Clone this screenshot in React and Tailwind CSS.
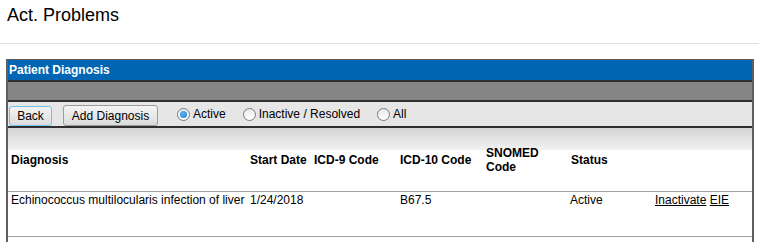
import React from "react";

function Radio({ checked, label }) {
  return (
    <label className="flex items-center">
      <span className="relative flex h-[13px] w-[13px] items-center justify-center rounded-full border border-[#7b7b7b] bg-[linear-gradient(to_bottom,#e9e9e9,#ffffff)]">
        {checked && (
          <span className="h-[7px] w-[7px] rounded-full bg-[radial-gradient(circle_at_40%_35%,#5ab4f0,#1a7fd0)]" />
        )}
      </span>
      <span className="ml-[3px] text-[12px] leading-[14px]">{label}</span>
    </label>
  );
}

export default function App() {
  return (
    <div className="h-[242px] w-[759px] overflow-hidden bg-white font-['Liberation_Sans',Arial,sans-serif] text-black">
      <div className="h-[44px] border-b border-[#e0e0e0] pl-[7px] pt-[5px] text-[18px] leading-[20px]">
        Act. Problems
      </div>
      <div className="pl-[6px] pt-[15px]">
        <div className="h-[200px] w-[748px] border-x-2 border-t border-[#5f5f5f]">
          <div className="flex h-[20px] items-center bg-[#0066b3] pl-[1px] text-[12px] font-bold leading-[14px] text-white">
            Patient Diagnosis
          </div>
          <div className="h-[2px] bg-[#2f2f2f]" />
          <div className="h-[18px] bg-[#858585]" />
          <div className="h-[2px] bg-[#2f2f2f]" />
          <div className="flex h-[24px] items-start bg-[#e6e6e6] text-[12px] leading-[14px]">
            <button className="ml-[1px] mt-[4px] flex h-[20px] w-[43px] items-center justify-center rounded-[3px] border border-[#6fc0ea] bg-[linear-gradient(to_bottom,#f4f4f4,#dcdcdc)]">
              Back
            </button>
            <button className="ml-[11px] mt-[3px] flex h-[21px] w-[95px] items-center justify-center rounded-[3px] border border-[#9c9c9c] bg-[linear-gradient(to_bottom,#f4f4f4,#dcdcdc)]">
              Add Diagnosis
            </button>
            <div className="ml-[19px] mt-[5px] flex items-center gap-[17px]">
              <Radio checked label="Active" />
              <Radio label="Inactive / Resolved" />
              <Radio label="All" />
            </div>
          </div>
          <div className="h-[2px] bg-[#2f2f2f]" />
          <div className="grid h-[63px] grid-cols-[239px_64px_86px_86px_85px_84px_100px] items-center bg-[linear-gradient(to_bottom,#d5d5d5_0px,#f1f1f1_22px,#ffffff_22px)] text-[12px] font-bold leading-[14px]">
            <div className="pl-[3px]">Diagnosis</div>
            <div className="pl-[3px]">Start Date</div>
            <div className="pl-[3px]">ICD-9 Code</div>
            <div className="pl-[3px]">ICD-10 Code</div>
            <div className="pl-[3px]">
              SNOMED
              <br />
              Code
            </div>
            <div className="pl-[3px]">Status</div>
            <div />
          </div>
          <div className="grid h-[45px] grid-cols-[239px_64px_86px_86px_85px_84px_100px] items-start border-t border-[#a0a0a0] pt-[1px] text-[12px] leading-[14px]">
            <div className="whitespace-nowrap pl-[3px]">Echinococcus multilocularis infection of liver</div>
            <div className="pl-[3px]">1/24/2018</div>
            <div className="pl-[3px]" />
            <div className="pl-[3px]">B67.5</div>
            <div className="pl-[3px]" />
            <div className="pl-[2px]">Active</div>
            <div className="pl-[3px]">
              <a href="#" className="underline">Inactivate</a>{" "}
              <a href="#" className="underline">EIE</a>
            </div>
          </div>
          <div className="border-t border-[#a0a0a0]" />
        </div>
      </div>
    </div>
  );
}
